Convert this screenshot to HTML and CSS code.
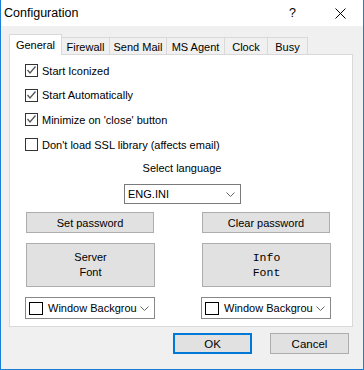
FILE: index.html
```html
<!DOCTYPE html>
<html lang="en">
<head>
    <meta charset="UTF-8">
    <title>Configuration</title>
    <link rel="stylesheet" href="styles.css">
</head>
<body>
    <div class="window">
        <div class="titlebar">
            <span class="title">Configuration</span>
            <span class="help">?</span>
            <span class="close">
                <svg width="11" height="11" viewBox="0 0 11 11"><path d="M0.5 0.5 L10.5 10.5 M10.5 0.5 L0.5 10.5" stroke="#000" stroke-width="1" fill="none"/></svg>
            </span>
        </div>

        <div class="body">
            <div class="tabs">
                <div class="tab active">General</div>
                <div class="tab w-firewall">Firewall</div>
                <div class="tab w-mail">Send Mail</div>
                <div class="tab w-agent">MS Agent</div>
                <div class="tab w-clock">Clock</div>
                <div class="tab w-busy">Busy</div>
            </div>

            <div class="panel">
                <div class="checks">
                    <label class="check">
                        <span class="box"><svg width="11" height="11" viewBox="0 0 11 11"><path d="M1.5 5 L4 8 L9.5 1.5" stroke="#555" stroke-width="1.3" fill="none"/></svg></span>
                        Start Iconized
                    </label>
                    <label class="check">
                        <span class="box"><svg width="11" height="11" viewBox="0 0 11 11"><path d="M1.5 5 L4 8 L9.5 1.5" stroke="#555" stroke-width="1.3" fill="none"/></svg></span>
                        Start Automatically
                    </label>
                    <label class="check">
                        <span class="box"><svg width="11" height="11" viewBox="0 0 11 11"><path d="M1.5 5 L4 8 L9.5 1.5" stroke="#555" stroke-width="1.3" fill="none"/></svg></span>
                        Minimize on 'close' button
                    </label>
                    <label class="check">
                        <span class="box"></span>
                        Don't load SSL library (affects email)
                    </label>
                </div>

                <div class="lang-label">Select language</div>
                <div class="combo lang">
                    <span class="combo-text">ENG.INI</span>
                    <svg class="chev" width="9" height="5" viewBox="0 0 9 5"><path d="M0.5 0.5 L4.5 4.5 L8.5 0.5" stroke="#666" stroke-width="1" fill="none"/></svg>
                </div>

                <div class="grid">
                    <button class="btn pw">Set password</button>
                    <button class="btn pw">Clear password</button>
                    <button class="btn font">Server<br>Font</button>
                    <button class="btn font mono">Info<br>Font</button>
                    <div class="combo color">
                        <span class="swatch"></span>
                        <span class="combo-text">Window Backgrou</span>
                        <svg class="chev" width="9" height="5" viewBox="0 0 9 5"><path d="M0.5 0.5 L4.5 4.5 L8.5 0.5" stroke="#666" stroke-width="1" fill="none"/></svg>
                    </div>
                    <div class="combo color">
                        <span class="swatch"></span>
                        <span class="combo-text">Window Backgrou</span>
                        <svg class="chev" width="9" height="5" viewBox="0 0 9 5"><path d="M0.5 0.5 L4.5 4.5 L8.5 0.5" stroke="#666" stroke-width="1" fill="none"/></svg>
                    </div>
                </div>
            </div>

            <div class="actions">
                <button class="btn action default">OK</button>
                <button class="btn action">Cancel</button>
            </div>
        </div>
    </div>
</body>
</html>
```

FILE: styles.css
```css
* {
    margin: 0;
    padding: 0;
    box-sizing: border-box;
}

body {
    background: #ffffff;
    font-family: "Liberation Sans", Arial, sans-serif;
    font-size: 11px;
    color: #000000;
}

.window {
    width: 364px;
    height: 370px;
    border: 1px solid #1c7fd6;
    border-top: none;
    background: #f0f0f0;
    display: flex;
    flex-direction: column;
}

.titlebar {
    height: 26px;
    background: #ffffff;
    display: flex;
    align-items: center;
    padding-left: 3px;
}

.title {
    font-size: 12.5px;
    flex: 1;
}

.help {
    font-size: 12.5px;
    margin-right: 39px;
}

.close {
    display: flex;
    margin-right: 17px;
}

.body {
    padding: 8px 0 0 8px;
}

/* tab strip */
.tabs {
    display: flex;
    align-items: flex-end;
    height: 20px;
    position: relative;
    z-index: 1;
}

.tab {
    height: 17px;
    border: 1px solid #d9d9d9;
    border-bottom: none;
    margin-left: -1px;
    display: flex;
    align-items: center;
    justify-content: center;
    background: #f0f0f0;
    padding-top: 1px;
}

.tab.active {
    width: 53px;
    height: 21px;
    margin-left: 0;
    margin-bottom: -1px;
    background: #ffffff;
    position: relative;
    z-index: 2;
    padding-bottom: 2px;
}

.w-firewall { width: 49px; }
.w-mail { width: 58px; }
.w-agent { width: 59px; }
.w-clock { width: 44px; }
.w-busy { width: 41px; }

.panel {
    width: 344px;
    height: 273px;
    background: #ffffff;
    border: 1px solid #d9d9d9;
    padding-top: 9px;
}

/* checkboxes */
.checks {
    display: flex;
    flex-direction: column;
    gap: 11.7px;
    padding-left: 15px;
}

.check {
    display: flex;
    align-items: center;
    height: 13px;
    gap: 4px;
}

.box {
    width: 13px;
    height: 13px;
    border: 1px solid #333333;
    background: #ffffff;
    display: flex;
    align-items: center;
    justify-content: center;
}

.lang-label {
    text-align: center;
    margin: 11px 0 0 2px;
    line-height: 13px;
}

.combo {
    display: flex;
    align-items: center;
    background: #ffffff;
    border: 1px solid #7a7a7a;
}

.combo.lang {
    width: 117px;
    height: 20px;
    margin: 9px 0 0 114px;
    padding: 0 5px 0 3px;
}

.combo-text {
    flex: 1;
}

.chev {
    flex: none;
}

/* button grid */
.grid {
    display: grid;
    grid-template-columns: 130px 130px;
    column-gap: 46px;
    row-gap: 10px;
    padding-left: 15px;
    margin-top: 8px;
}

.btn {
    font-family: "Liberation Sans", Arial, sans-serif;
    font-size: 11px;
    color: #000000;
    background: #e1e1e1;
    border: 1px solid #adadad;
}

.btn.pw {
    height: 21px;
    width: 128px;
    margin-left: 1px;
}

.btn.font {
    height: 44px;
    width: 129px;
    margin-left: 1px;
    line-height: 15px;
}

.btn.mono {
    font-family: "Liberation Mono", "Courier New", monospace;
    font-size: 11.5px;
}

.combo.color {
    height: 22px;
    padding: 0 5px 0 3px;
    border-color: #888888;
}

.swatch {
    width: 14px;
    height: 13px;
    border: 1px solid #000000;
    margin-right: 5px;
}

/* dialog buttons */
.actions {
    display: flex;
    gap: 18px;
    margin: 6px 0 0 164px;
}

.action {
    width: 79px;
    height: 21px;
    font-size: 11.5px;
}

.action.default {
    border: 2px solid #0078d7;
}
```
